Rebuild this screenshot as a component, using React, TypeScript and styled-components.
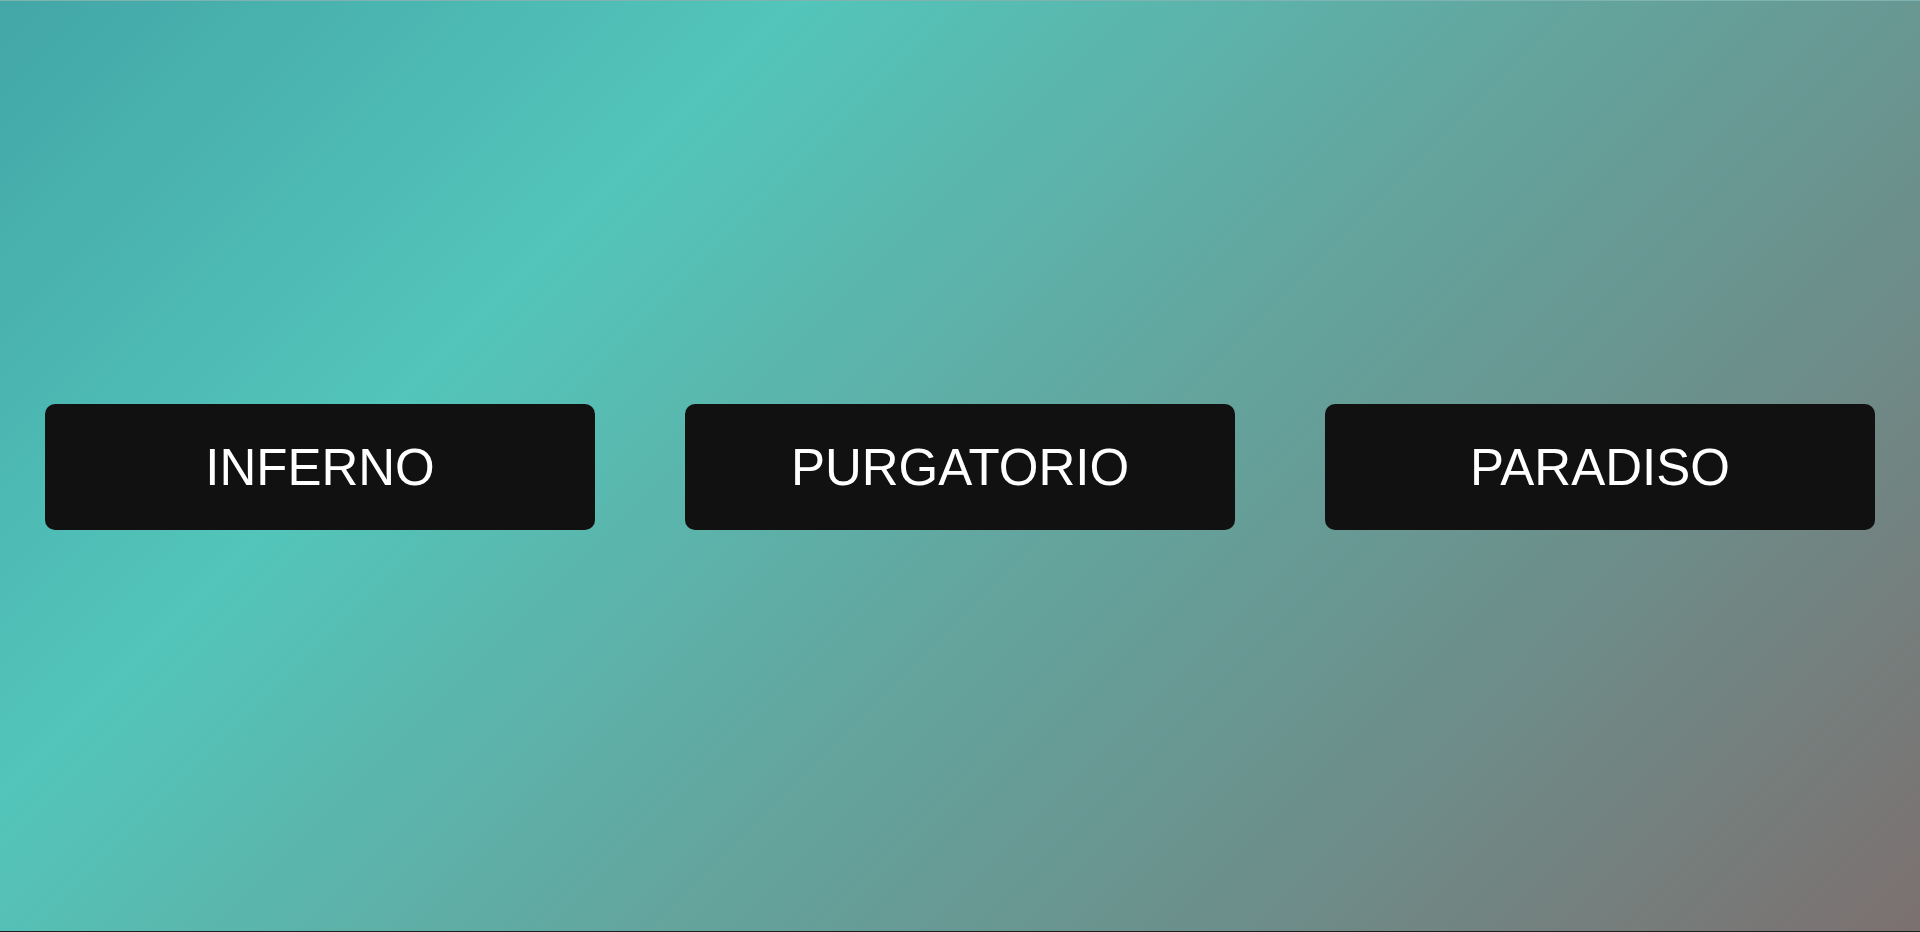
import React from "react";
import styled, { createGlobalStyle } from "styled-components";

const GlobalStyle = createGlobalStyle`
  html, body {
    margin: 0;
    padding: 0;
    background: #1f1f1f;
  }
  * { box-sizing: border-box; }
`;

const Page = styled.main`
  height: 931px;
  padding-top: 2px;
  border-top: 1px solid #7fb3b1;
  background: linear-gradient(135deg, #43a6a7 0%, #53c5ba 28%, #63a59e 55%, #6c8f8b 75%, #7c7070 100%);
  display: flex;
  align-items: center;
  justify-content: space-around;
  font-family: "Liberation Sans", Arial, sans-serif;
`;

const RealmButton = styled.button`
  width: 550px;
  height: 126px;
  border: none;
  border-radius: 10px;
  background: #111111;
  color: #ffffff;
  font-family: "Liberation Sans", Arial, sans-serif;
  font-size: 51px;
  text-transform: uppercase;
  cursor: pointer;
  display: flex;
  align-items: center;
  justify-content: center;
  padding: 0;
`;

const realms = ["Inferno", "Purgatorio", "Paradiso"];

export default function App() {
  return (
    <>
      <GlobalStyle />
      <Page>
        {realms.map((r) => (
          <RealmButton key={r}>{r}</RealmButton>
        ))}
      </Page>
    </>
  );
}
